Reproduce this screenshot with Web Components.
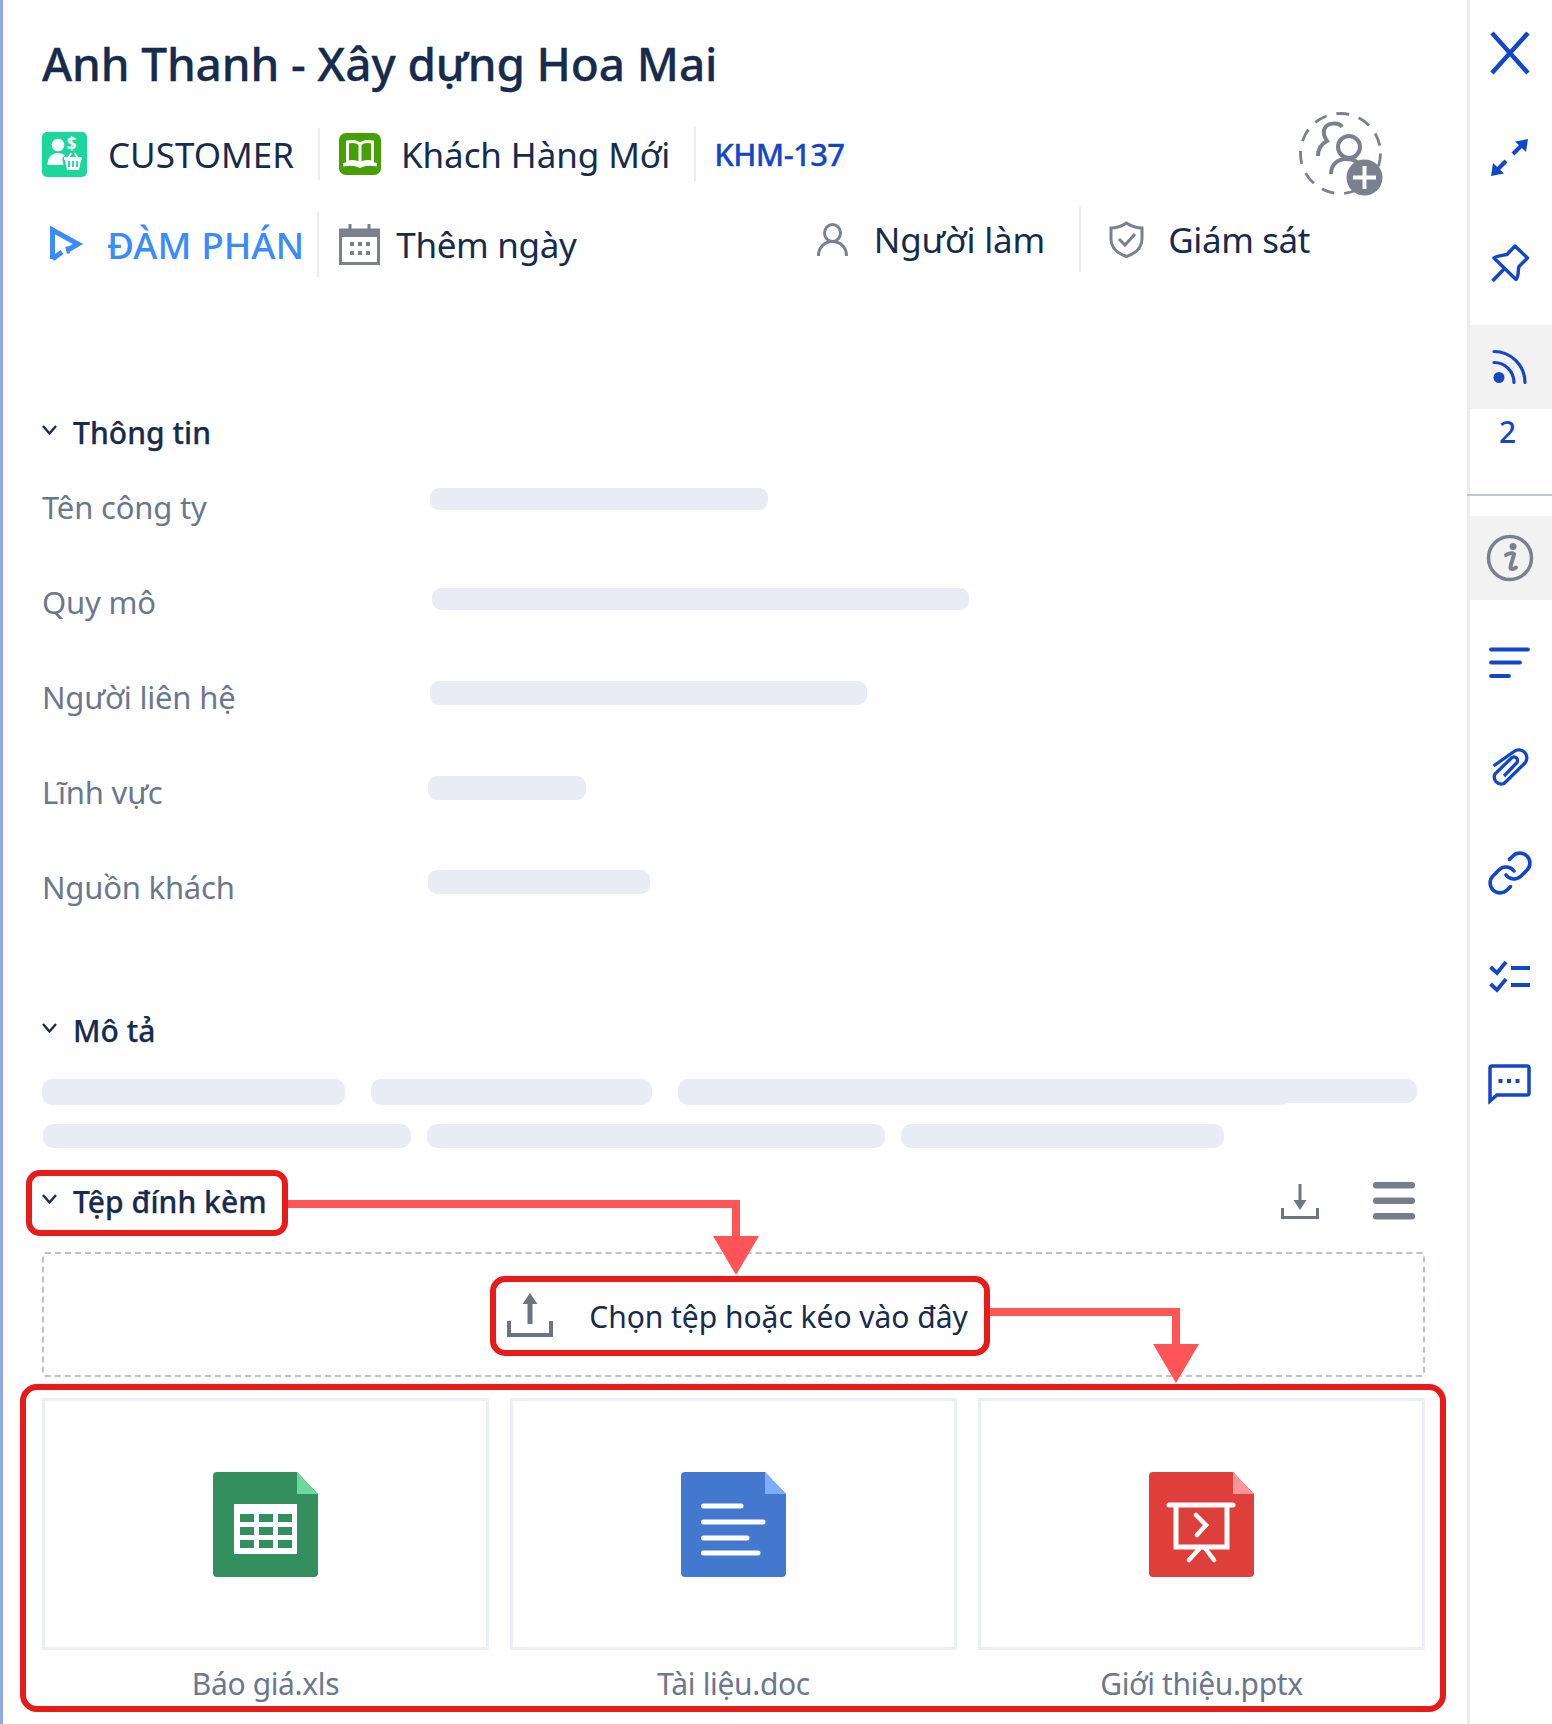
<!DOCTYPE html>
<html lang="vi"><head><meta charset="utf-8"><title>KHM-137</title>
<style>html,body{margin:0;padding:0;background:#fff;font-family:"Noto Sans","Open Sans",sans-serif;color:#172b4d}</style>
</head><body>
<detail-panel>
  <h-title>Anh Thanh - Xây dựng Hoa Mai</h-title>
  <meta-row>
    <meta-item icon="customer" gap="21" size="35" ls="0">CUSTOMER</meta-item>
    <v-sep h="52" l="24" r="19"></v-sep>
    <meta-item icon="book" gap="20" size="35" ls="-.1">Khách Hàng Mới</meta-item>
    <v-sep h="54" l="24" r="18"></v-sep>
    <meta-item size="31" weight="500" color="#1446c8" ls="-.6" bold="1">KHM-137</meta-item>
    <x-icon name="adduser" slot="end"></x-icon>
  </meta-row>
  <status-row>
    <meta-item icon="play" gap="26" size="37" weight="500" color="#3a8bff" ls="0" pad="8">ĐÀM PHÁN</meta-item>
    <v-sep h="65" l="13" r="20"></v-sep>
    <meta-item icon="calendar" gap="16" size="35" ls="-.35">Thêm ngày</meta-item>
    <meta-item slot="end" icon="person" gap="26" size="35" ls="-.15">Người làm</meta-item>
    <v-sep slot="end" h="65" l="34" r="28"></v-sep>
    <meta-item slot="end" icon="shield" gap="24" size="35" ls="-.4">Giám sát</meta-item>
  </status-row>
  <section-head top="133">Thông tin</section-head>
  <field-row label="Tên công ty" x="388" w="338" t="28" h="22" style="margin-top:8px"></field-row>
  <field-row label="Quy mô" x="390" w="537" t="33" h="22"></field-row>
  <field-row label="Người liên hệ" x="388" w="437" t="31" h="24"></field-row>
  <field-row label="Lĩnh vực" x="386" w="158" t="31" h="24"></field-row>
  <field-row label="Nguồn khách" x="386" w="222" t="30" h="24"></field-row>
  <section-head top="75">Mô tả</section-head>
  <skel-line top="29" left="0" gap="26" h="26" bars="303,281,613,~147"></skel-line>
  <skel-line top="19" left="1" gap="16" h="24" bars="368,458,323"></skel-line>
  <section-head top="33">Tệp đính kèm
    <x-icon slot="end" name="download" style="margin-right:54px"></x-icon>
    <x-icon slot="end" name="menu" style="margin-right:10px"></x-icon>
  </section-head>
  <drop-zone>Chọn tệp hoặc kéo vào đây</drop-zone>
  <file-grid>
    <file-card icon="xls">Báo giá.xls</file-card>
    <file-card icon="doc">Tài liệu.doc</file-card>
    <file-card icon="ppt">Giới thiệu.pptx</file-card>
  </file-grid>
  <side-rail slot="rail">
    <rail-btn name="close"></rail-btn>
    <rail-btn name="expand"></rail-btn>
    <rail-btn name="pin"></rail-btn>
    <rail-block name="rss" top="10"></rail-block>
    <rail-count>2</rail-count>
    <rail-rule></rail-rule>
    <rail-block name="info" top="20"></rail-block>
    <rail-btn name="lines" style="margin-top:10px"></rail-btn>
    <rail-btn name="clip"></rail-btn>
    <rail-btn name="link"></rail-btn>
    <rail-btn name="checks" style="height:101px"></rail-btn>
    <rail-btn name="chat" style="height:116px"></rail-btn>
  </side-rail>
  <anno-layer slot="over"></anno-layer>
</detail-panel>
<script>
const B='#1446c8',G='#7a808e';
const fileBase=(a,b,inner)=>`<path d="M4 0H84L105 22V101a4 4 0 0 1-4 4H4a4 4 0 0 1-4-4V4a4 4 0 0 1 4-4Z" fill="${a}"/><path d="M84 0L105 22H84Z" fill="${b}"/>${inner}`;
const ICONS={
customer:[45,45,`<rect width="45" height="45" rx="5" fill="#1bd79b"/><circle cx="16" cy="13" r="6.3" fill="#fff"/><path d="M5.500 33c0-8 4.500-12 10.500-12 3 0 5 1 7 2.500-2.500 1-3 3-2.500 5l1 4.500Z" fill="#fff"/><text x="29.500" y="18" font-family="Noto Sans" font-size="17" font-weight="700" text-anchor="middle" fill="#fff">$</text><path d="M26 26l3.500-5M36 26l-3.500-5" stroke="#fff" stroke-width="1.600" fill="none"/><path d="M22 25h18v3h-1l-2 10H25l-2-10h-1Z" fill="#fff"/><path d="M27 29v6M31 29v6M35 29v6" stroke="#1bd79b" stroke-width="1.800"/>`],
book:[42,42,`<rect width="42" height="42" rx="7" fill="#45a004"/><path d="M21 11C18 8.500 13 8 8.500 9V29c4.500-1 9.500-.5 12.500 2 3-2.500 8-3 12.500-2V9C29 8 24 8.500 21 11Z" fill="none" stroke="#fff" stroke-width="3"/><path d="M21 11V31" stroke="#fff" stroke-width="3"/><path d="M4 30v3.500c6-1.500 12-1 17 1.500 5-2.500 11-3 17-1.500V30c-6-1-12-.5-17 2-5-2.500-11-3-17-2Z" fill="#fff"/>`],
play:[31,34,`<path d="M2.500 32V3L28 17l-9.500 5.500" fill="none" stroke="#3a8bff" stroke-width="5"/><path d="M2.500 32L12 25" fill="none" stroke="#3a8bff" stroke-width="5"/><path d="M17 19.500l1.500 7" stroke="#3a8bff" stroke-width="3.500"/>`],
calendar:[41,41,`<rect x="1.500" y="6" width="38" height="33.500" fill="none" stroke="#7a808e" stroke-width="3"/><rect x="1.500" y="6" width="38" height="7" fill="#7a808e"/><path d="M11 0v9M30 0v9" stroke="#7a808e" stroke-width="3"/><path d="M11 20h4M19 20h4M27 20h4M11 29h4M19 29h4M27 29h4" stroke="#7a808e" stroke-width="4"/>`],
person:[31,33,`<ellipse cx="15.500" cy="10" rx="8" ry="8.500" fill="none" stroke="${G}" stroke-width="3"/><path d="M1.500 33c0-8.500 6-14.500 14-14.500s14 6 14 14.500" fill="none" stroke="${G}" stroke-width="3"/>`],
shield:[35,37,`<path d="M17.500 2C22 5 27 7 33 7V18C33 27 26 32.500 17.500 35.500 9 32.500 2 27 2 18V7C8 7 13 5 17.500 2Z" fill="none" stroke="${G}" stroke-width="3"/><path d="M10 18l6 6 10-11" fill="none" stroke="${G}" stroke-width="3"/>`],
adduser:[85,85,`<circle cx="41.500" cy="41.500" r="40" fill="none" stroke="${G}" stroke-width="2.800" stroke-dasharray="13 10"/><path d="M43 15c-3-5-16-5-18 3-1 5 1 8 3 11-6 3-9 8-9 15" fill="none" stroke="${G}" stroke-width="4"/><circle cx="50" cy="35" r="11" fill="none" stroke="${G}" stroke-width="4"/><path d="M32 62c0-9 6-15 15-15 5 0 9 1 12 4" fill="none" stroke="${G}" stroke-width="4"/><circle cx="65.500" cy="65.500" r="18" fill="${G}"/><path d="M65.500 54v23M54 65.500h23" stroke="#fff" stroke-width="4"/>`],
chev:[15,10,`<path d="M1 1l6.500 7.500L14 1" fill="none" stroke="#172b4d" stroke-width="2.400"/>`],
download:[38,35,`<path d="M19 0V18" stroke="#6f7683" stroke-width="3"/><path d="M12.500 16h13L19 26Z" fill="#6f7683"/><path d="M1.500 24V33.500H36.500V24" fill="none" stroke="#6f7683" stroke-width="3"/>`],
menu:[42,38,`<g fill="#777e8b"><rect y="0" width="42" height="6.500" rx="3"/><rect y="15.500" width="42" height="6.500" rx="3"/><rect y="31" width="42" height="6.500" rx="3"/></g>`],
upload:[46,44,`<path d="M23 9V31" stroke="#6c7480" stroke-width="5"/><path d="M15.500 11L23 0l7.500 11Z" fill="#6c7480"/><path d="M2 28V42H44V28" fill="none" stroke="#6c7480" stroke-width="4"/>`],
xls:[105,105,fileBase('#348f5f','#6bd99b',`<rect x="21" y="32" width="63" height="50" fill="#fff"/><g fill="#348f5f"><rect x="27" y="42" width="14" height="8"/><rect x="46" y="42" width="14" height="8"/><rect x="65" y="42" width="14" height="8"/><rect x="27" y="55" width="14" height="8"/><rect x="46" y="55" width="14" height="8"/><rect x="65" y="55" width="14" height="8"/><rect x="27" y="68" width="14" height="8"/><rect x="46" y="68" width="14" height="8"/><rect x="65" y="68" width="14" height="8"/></g>`)],
doc:[105,105,fileBase('#4478cf','#7fadf7',`<path d="M22.500 34H60M22.500 50H82M22.500 66H66M22.500 81H77" stroke="#fff" stroke-width="5" stroke-linecap="round"/>`)],
ppt:[105,105,fileBase('#df3f3a','#fe9596',`<path d="M20 33H84" stroke="#fff" stroke-width="5" stroke-linecap="round"/><path d="M27 33V75H78V33" fill="none" stroke="#fff" stroke-width="5"/><path d="M47 43l10 10-9 10" fill="none" stroke="#fff" stroke-width="4.500" stroke-linecap="round"/><path d="M51 76L40 88M56 76L65 88" fill="none" stroke="#fff" stroke-width="4.500" stroke-linecap="round"/>`)],
close:[36,38,`<path d="M0-1L36 39M36-1L0 39" stroke="${B}" stroke-width="4.500"/>`],
expand:[38,37,`<path d="M22 15L32 5M15 22L5 32" stroke="${B}" stroke-width="4.200"/><path d="M37 0L24 2.500 35 13Z M0 37L13 34.500 2 24Z" fill="${B}"/>`],
pin:[38,38,`<path d="M24 2L36.500 14 28 22.500C26.500 26 28.500 31 25 35.500L3 14C8 11 12 11.500 16 10.500Z" fill="none" stroke="${B}" stroke-width="3.400" stroke-linejoin="round"/><path d="M13 25L1.500 37" stroke="${B}" stroke-width="3.600"/>`],
rss:[36,36,`<path d="M2 2.500A31 31 0 0 1 33 33.500M2 13.500A20 20 0 0 1 22 33.500" fill="none" stroke="${B}" stroke-width="3.200" stroke-linecap="round"/><circle cx="7" cy="28.500" r="5.500" fill="${B}"/>`],
info:[46,46,`<circle cx="23" cy="23" r="21.500" fill="none" stroke="${G}" stroke-width="3.500"/><circle cx="26" cy="11.500" r="3.500" fill="${G}"/><path d="M19 20c2-1.500 6-2.500 8-1-.5 4-3.500 10-3.500 13.500 0 2 3 2 5.500 0" fill="none" stroke="${G}" stroke-width="4" stroke-linecap="round"/>`],
lines:[41,32,`<path d="M2 2H39M2 15H31M2 28.500H20" stroke="${B}" stroke-width="3.800" stroke-linecap="round" transform="translate(0 .500)"/>`],
clip:[36,40,`<path d="M1.500 18L22 3.500A8 8 0 0 1 33 15L12 35.500A7 7 0 0 1 3 26L19.500 10A3.500 3.500 0 0 1 24.500 15L12 28" fill="none" stroke="${B}" stroke-width="3.300"/>`],
link:[42,42,`<g transform="translate(-3 -3) scale(2)" fill="none" stroke="${B}" stroke-width="1.800" stroke-linecap="round" stroke-linejoin="round"><path d="M10 13a5 5 0 0 0 7.540.54l3-3a5 5 0 0 0-7.070-7.070l-1.720 1.710"/><path d="M14 11a5 5 0 0 0-7.540-.54l-3 3a5 5 0 0 0 7.070 7.070l1.710-1.710"/></g>`],
checks:[42,32,`<path d="M1.500 7L8 13 17 2M1.500 24L8 30 17 19" fill="none" stroke="${B}" stroke-width="3.800"/><path d="M22 8H41M22 25H41" stroke="${B}" stroke-width="4"/>`],
chat:[43,41,`<path d="M2 37V4A2 2 0 0 1 4 2H39A2 2 0 0 1 41 4V29A2 2 0 0 1 39 31H9Z" fill="none" stroke="${B}" stroke-width="3.500"/><path d="M10.500 15h4v4h-4ZM19 15h4v4h-4ZM27.500 15h4v4h-4Z" fill="${B}"/>`]
};
function def(tag,render){customElements.define(tag,class extends HTMLElement{constructor(){super();this.attachShadow({mode:'open'})}connectedCallback(){if(this._d)return;this._d=1;this.shadowRoot.innerHTML=render(this)}});}
const A=(e,n,d)=>e.getAttribute(n)??d;
def('x-icon',e=>{const [w,h,s]=ICONS[A(e,'name')];return `<style>:host{display:inline-flex;flex:none;line-height:0}svg{display:block;overflow:visible}</style><svg width="${w}" height="${h}" viewBox="0 0 ${w} ${h}" aria-hidden="true">${s}</svg>`});
def('detail-panel',()=>`<style>:host{display:block;position:relative;width:1552px;height:1724px;overflow:hidden;background:#fff}
.wrap{display:flex;height:100%}.main{width:1467px;box-sizing:border-box;border-left:3px solid #8fa8e8;padding:0 42px 0 39px}</style>
<div class="wrap"><div class="main"><slot></slot></div><slot name="rail"></slot></div><slot name="over"></slot>`);
def('h-title',()=>`<style>:host{display:block;padding-top:33px;height:60px;line-height:60px;font-size:46px;font-weight:500;letter-spacing:-.15px;-webkit-text-stroke:.3px #172b4d;color:#172b4d;white-space:nowrap}</style><slot></slot>`);
def('meta-row',()=>`<style>:host{display:flex;align-items:center;height:60px;margin-top:31px}.end{margin-left:auto;margin-right:41px;display:flex;margin-block:-12px}</style><slot></slot><div class="end"><slot name="end"></slot></div>`);
def('status-row',()=>`<style>:host{display:flex;align-items:center;height:70px;margin-top:25px}.end{margin-left:auto;margin-right:115px;display:flex;align-items:center;margin-bottom:10px}</style><slot></slot><div class="end"><slot name="end"></slot></div>`);
def('meta-item',e=>{const ic=A(e,'icon');return `<style>:host{display:inline-flex;align-items:center;flex:none;white-space:nowrap;font-size:${A(e,'size','33')}px;font-weight:${A(e,'weight','400')};letter-spacing:${A(e,'ls','0')}px;color:${A(e,'color','#172b4d')};padding-left:${A(e,'pad','0')}px;${A(e,'bold')?'-webkit-text-stroke:.3px currentColor;':''}}.g{margin-right:${A(e,'gap','0')}px}</style>${ic?`<x-icon class="g" name="${ic}"></x-icon>`:''}<slot></slot>`});
def('v-sep',e=>`<style>:host{display:block;flex:none;width:2px;height:${A(e,'h','52')}px;background:#e9ebef;margin:0 ${A(e,'r','20')}px 0 ${A(e,'l','24')}px}</style>`);
def('section-head',e=>`<style>:host{display:flex;align-items:center;height:40px;margin-top:${A(e,'top','0')}px;font-size:30px;font-weight:500;letter-spacing:.05px;-webkit-text-stroke:.25px #172b4d;color:#172b4d;white-space:nowrap}.c{margin:-5px 16px 0 0}.end{margin-left:auto;display:flex;align-items:center}</style><x-icon class="c" name="chev"></x-icon><slot></slot><div class="end"><slot name="end"></slot></div>`);
def('field-row',e=>`<style>:host{display:flex;height:95px;align-items:flex-start}.l{width:${A(e,'x')}px;flex:none;font-size:31px;line-height:95px;letter-spacing:-.2px;color:#6b778c;white-space:nowrap}.b{width:${A(e,'w')}px;height:${A(e,'h')}px;margin-top:${A(e,'t')}px;border-radius:9px;background:#e9ecf4}</style><div class="l">${A(e,'label')}</div><div class="b"></div>`);
def('skel-line',e=>{const g=+A(e,'gap');return `<style>:host{display:flex;gap:${g}px;margin-top:${A(e,'top')}px;margin-left:${A(e,'left')}px}i{display:block;height:${A(e,'h')}px;border-radius:10px;background:#e9ecf4}</style>${A(e,'bars').split(',').map(w=>w[0]=='~'?`<i style="width:${w.slice(1)}px;height:24px;margin-left:${-(g+21)}px"></i>`:`<i style="width:${w}px"></i>`).join('')}`});
def('drop-zone',()=>`<style>:host{display:flex;align-items:center;justify-content:center;box-sizing:border-box;height:125px;margin-top:31px;padding-left:8px;border:2px dashed #bcc1cb;border-radius:3px;font-size:30px;letter-spacing:-.03px;color:#172b4d;white-space:nowrap}x-icon{margin-right:36px}.t{margin-top:3px}</style><x-icon name="upload"></x-icon><div class="t"><slot></slot></div>`);
def('file-grid',()=>`<style>:host{display:grid;grid-template-columns:repeat(3,447px);gap:21px;margin-top:21px}</style><slot></slot>`);
def('file-card',e=>`<style>:host{display:block;text-align:center;font-size:30px;letter-spacing:-.35px;color:#6b778c}.box{box-sizing:border-box;height:252px;border:3px solid #ebeef5;display:flex;align-items:center;justify-content:center}.t{line-height:68px;white-space:nowrap}</style><div class="box"><x-icon name="${A(e,'icon')}"></x-icon></div><div class="t"><slot></slot></div>`);
def('side-rail',()=>`<style>:host{display:flex;flex-direction:column;width:85px;box-sizing:border-box;border-left:3px solid #ececec}</style><slot></slot>`);
def('rail-btn',e=>`<style>:host{display:flex;align-items:center;justify-content:center;height:105px;flex:none;padding-right:3px}</style><x-icon name="${A(e,'name')}"></x-icon>`);
def('rail-block',e=>`<style>:host{display:flex;align-items:center;justify-content:center;height:84px;flex:none;padding-right:3px;margin-top:${A(e,'top')}px;background:#f2f2f2}</style><x-icon name="${A(e,'name')}"></x-icon>`);
def('rail-count',()=>`<style>:host{display:block;text-align:center;height:46px;line-height:46px;padding-right:7px;font-size:30px;font-weight:500;color:#1446c8}</style><slot></slot>`);
def('rail-rule',()=>`<style>:host{display:block;height:2px;margin:39px 0 0 -3px;background:#c1c7d0}</style>`);
def('anno-layer',()=>`<style>:host{position:absolute;inset:0;pointer-events:none}svg{display:block}</style>
<svg width="1552" height="1724" viewBox="0 0 1552 1724" fill="none" aria-hidden="true">
<path d="M288 1204H736V1238M990 1312H1176V1346" stroke="#ff5558" stroke-width="8"/>
<path d="M713 1236H759L736 1275ZM1153 1344H1199L1176 1383Z" fill="#ff5558"/>
<rect x="29" y="1173" width="256" height="60" rx="11" stroke="#e81a1a" stroke-width="6"/>
<rect x="493" y="1279" width="494" height="74" rx="12" stroke="#e81a1a" stroke-width="6"/>
<rect x="23" y="1387" width="1420" height="322" rx="14" stroke="#e81a1a" stroke-width="6"/>
</svg>`);
</script>
</body></html>
